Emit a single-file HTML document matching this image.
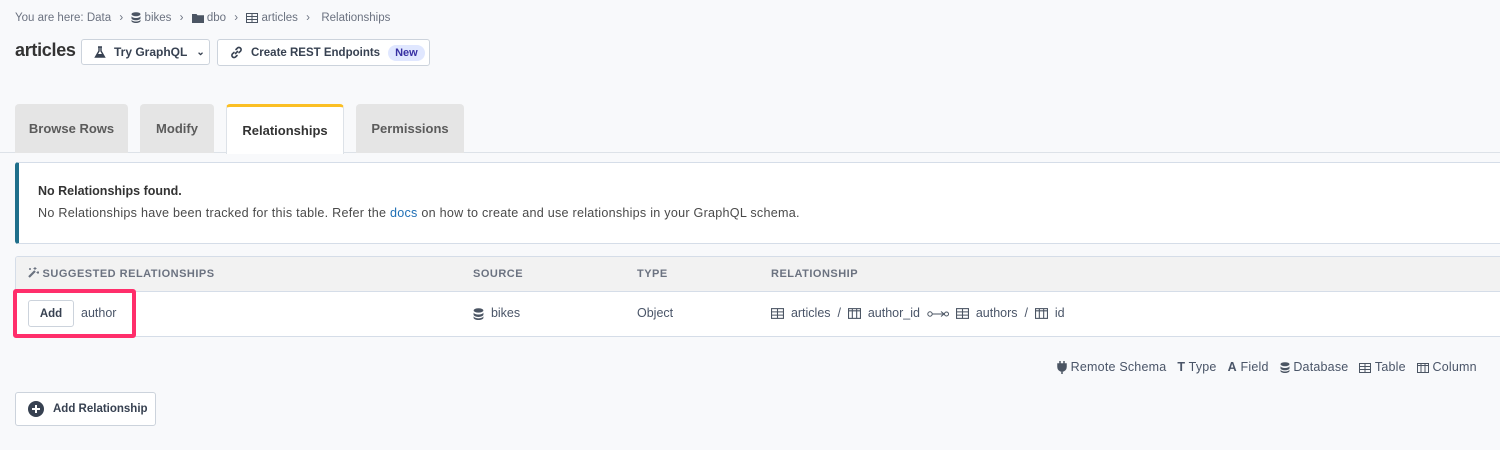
<!DOCTYPE html>
<html><head><meta charset="utf-8"><style>
*{box-sizing:border-box;margin:0;padding:0}
body{width:1500px;height:450px;background:#f8f9fb;font-family:"Liberation Sans",sans-serif;color:#4a5568;position:relative;overflow:hidden}
.abs{position:absolute}
.ic{display:inline-block;vertical-align:middle}
.bc{left:15px;top:12px;font-size:11.5px;color:#6b7280;white-space:nowrap}
.bc span{margin:0 5px}
.btn{border:1px solid #ccd3dc;background:#fff;border-radius:3px;font-size:12px;font-weight:bold;color:#374151;display:flex;align-items:center;white-space:nowrap}
.tab{top:104px;height:49px;background:#e5e5e5;border-radius:4px 4px 0 0;font-size:13px;font-weight:bold;color:#5b5b5b;display:flex;align-items:center;justify-content:center}
.th{font-size:11px;font-weight:bold;color:#6b7280;letter-spacing:.5px;top:268px}
.td{font-size:12.5px;color:#4a5568;top:306px;white-space:nowrap}
.lg{top:360px;font-size:12.5px;color:#4a5568;white-space:nowrap}
</style></head><body>
<div class="abs bc">You are here: Data <span>›</span>
<svg class="ic" width="10" height="11" viewBox="0 0 10 11"><ellipse cx="5" cy="2.2" rx="4.5" ry="2" fill="#4b5563"/><path d="M.5 4c0 1 2 2 4.5 2s4.5-1 4.5-2v2.2c0 1-2 2-4.5 2S.5 7.2.5 6.2z M.5 7.5c0 1 2 2 4.5 2s4.5-1 4.5-2v1.5c0 1-2 2-4.5 2S.5 10 .5 9z" fill="#4b5563"/></svg> bikes <span>›</span>
<svg class="ic" width="12" height="10" viewBox="0 0 12 10"><path d="M0 1h4.5l1 1.3H12V10H0z" fill="#4b5563"/></svg> dbo <span>›</span>
<svg class="ic" width="12" height="10" viewBox="0 0 12 10"><rect x=".5" y=".5" width="11" height="9" fill="none" stroke="#4b5563"/><path d="M.5 3.5h11M.5 6.5h11M6 .5v9" stroke="#4b5563"/></svg> articles <span>›</span>&nbsp; Relationships</div>
<div class="abs" style="left:15px;top:40px;font-size:18px;font-weight:bold;color:#333;letter-spacing:-.3px">articles</div>
<div class="abs btn" style="left:81px;top:39px;width:129px;height:26px;padding-left:12px">
<svg width="12" height="12" viewBox="0 0 12 12" style="margin-right:8px"><path d="M4 1h4M5 1v4L1.5 11h9L7 5V1" fill="none" stroke="#374151" stroke-width="1.4"/><path d="M3 8h6l1.3 3H1.7z" fill="#374151"/></svg>Try GraphQL <span style="margin-left:9px;font-size:10px">⌄</span></div>
<div class="abs btn" style="left:217px;top:39px;width:213px;height:27px;padding-left:12px;font-size:11.5px">
<svg width="13" height="13" viewBox="0 0 13 13" style="margin-right:8px"><path d="M5.5 7.5l2-2M6 3.5l1.5-1.5a2.2 2.2 0 013.1 3.1L9 6.6M7 9.5l-1.5 1.5a2.2 2.2 0 01-3.1-3.1L4 6.4" fill="none" stroke="#374151" stroke-width="1.6" stroke-linecap="round"/></svg>Create REST Endpoints
<span style="margin-left:8px;background:#e0e7ff;color:#3730a3;border-radius:9px;padding:2px 7px;font-size:11px">New</span></div>
<div class="abs" style="left:0;top:152px;width:1500px;height:1px;background:#dde2e8"></div>
<div class="abs tab" style="left:15px;width:113px">Browse Rows</div>
<div class="abs tab" style="left:140px;width:74px">Modify</div>
<div class="abs tab" style="left:226px;width:118px;background:#fff;border:1px solid #dde2e8;border-top:3px solid #fbbf24;border-bottom:none;height:50px;color:#333">Relationships</div>
<div class="abs tab" style="left:356px;width:108px">Permissions</div>
<div class="abs" style="left:15px;top:162px;width:1490px;height:82px;background:#fff;border:1px solid #d5dde8;border-left:4px solid #1f6f8b;border-radius:3px"></div>
<div class="abs" style="left:38px;top:184px;font-size:12.5px;font-weight:bold;color:#333">No Relationships found.</div>
<div class="abs" style="left:38px;top:206px;font-size:12.6px;color:#4a4a4a;white-space:nowrap;letter-spacing:.25px">No Relationships have been tracked for this table. Refer the <span style="color:#1f6fb5">docs</span> on how to create and use relationships in your GraphQL schema.</div>
<div class="abs" style="left:15px;top:256px;width:1490px;height:81px;background:#fff;border:1px solid #d5dde8;border-radius:3px;overflow:hidden"><div style="height:35px;background:#f2f2f2;border-bottom:1px solid #d5dde8"></div></div>
<div class="abs th" style="left:28px"><svg class="ic" width="11" height="11" viewBox="0 0 11 11" style="margin-top:-3px"><path d="M1 10l6-6" stroke="#6b7280" stroke-width="2.2"/><path d="M7 0v3M5.5 1.5h3M10 4v3M8.5 5.5h3M2 1v2M1 2h2" stroke="#6b7280"/></svg> SUGGESTED RELATIONSHIPS</div>
<div class="abs th" style="left:473px">SOURCE</div>
<div class="abs th" style="left:637px">TYPE</div>
<div class="abs th" style="left:771px">RELATIONSHIP</div>
<div class="abs" style="left:13px;top:289px;width:123px;height:49px;border:4px solid #ff2e6b;border-radius:3px"></div>
<div class="abs btn" style="left:28px;top:300px;width:46px;height:27px;justify-content:center;font-size:11.5px">Add</div>
<div class="abs td" style="left:81px">author</div>
<div class="abs td" style="left:473px"><svg class="ic" width="11" height="12" viewBox="0 0 10 11"><ellipse cx="5" cy="2.2" rx="4.5" ry="2" fill="#4b5563"/><path d="M.5 4c0 1 2 2 4.5 2s4.5-1 4.5-2v2.2c0 1-2 2-4.5 2S.5 7.2.5 6.2z M.5 7.5c0 1 2 2 4.5 2s4.5-1 4.5-2v1.5c0 1-2 2-4.5 2S.5 10 .5 9z" fill="#4b5563"/></svg>&nbsp; bikes</div>
<div class="abs td" style="left:637px">Object</div>
<div class="abs td" style="left:771px">
<svg class="ic" width="13" height="11" viewBox="0 0 12 10"><rect x=".5" y=".5" width="11" height="9" fill="none" stroke="#4b5563"/><path d="M.5 3.5h11M.5 6.5h11M6 .5v9" stroke="#4b5563"/></svg>&nbsp; articles &nbsp;/&nbsp;
<svg class="ic" width="13" height="11" viewBox="0 0 12 10"><rect x=".5" y=".5" width="11" height="9" fill="none" stroke="#4b5563"/><path d="M.5 2.5h11M4 .5v9M8 .5v9" stroke="#4b5563"/></svg>&nbsp; author_id&nbsp;
<svg class="ic" width="22" height="8" viewBox="0 0 22 8"><circle cx="3" cy="4" r="2.2" fill="none" stroke="#4b5563"/><path d="M5 4h12M14 1.5l3 2.5-3 2.5" fill="none" stroke="#4b5563"/><circle cx="19.5" cy="4" r="2" fill="none" stroke="#4b5563"/></svg>&nbsp;
<svg class="ic" width="13" height="11" viewBox="0 0 12 10"><rect x=".5" y=".5" width="11" height="9" fill="none" stroke="#4b5563"/><path d="M.5 3.5h11M.5 6.5h11M6 .5v9" stroke="#4b5563"/></svg>&nbsp; authors &nbsp;/&nbsp;
<svg class="ic" width="13" height="11" viewBox="0 0 12 10"><rect x=".5" y=".5" width="11" height="9" fill="none" stroke="#4b5563"/><path d="M.5 2.5h11M4 .5v9M8 .5v9" stroke="#4b5563"/></svg>&nbsp; id</div>
<div class="abs lg" style="left:1057px;letter-spacing:.2px">
<svg class="ic" width="10" height="13" viewBox="0 0 10 13"><path d="M3 0v3M7 0v3M1 3h8v3a4 4 0 01-8 0zM5 10v3" stroke="#4b5563" stroke-width="1.5" fill="#4b5563"/></svg> Remote Schema &nbsp; <b>T</b> Type &nbsp; <b>A</b> Field &nbsp;
<svg class="ic" width="10" height="11" viewBox="0 0 10 11"><ellipse cx="5" cy="2.2" rx="4.5" ry="2" fill="#4b5563"/><path d="M.5 4c0 1 2 2 4.5 2s4.5-1 4.5-2v2.2c0 1-2 2-4.5 2S.5 7.2.5 6.2z M.5 7.5c0 1 2 2 4.5 2s4.5-1 4.5-2v1.5c0 1-2 2-4.5 2S.5 10 .5 9z" fill="#4b5563"/></svg> Database &nbsp;
<svg class="ic" width="12" height="10" viewBox="0 0 12 10"><rect x=".5" y=".5" width="11" height="9" fill="none" stroke="#4b5563"/><path d="M.5 3.5h11M.5 6.5h11M6 .5v9" stroke="#4b5563"/></svg> Table &nbsp;
<svg class="ic" width="12" height="10" viewBox="0 0 12 10"><rect x=".5" y=".5" width="11" height="9" fill="none" stroke="#4b5563"/><path d="M.5 2.5h11M4 .5v9M8 .5v9" stroke="#4b5563"/></svg> Column</div>
<div class="abs btn" style="left:15px;top:392px;width:141px;height:34px;padding-left:12px;font-size:11.5px">
<svg width="16" height="16" viewBox="0 0 16 16" style="margin-right:9px"><circle cx="8" cy="8" r="8" fill="#374151"/><path d="M8 4v8M4 8h8" stroke="#fff" stroke-width="2"/></svg>Add Relationship</div>
</body></html>
